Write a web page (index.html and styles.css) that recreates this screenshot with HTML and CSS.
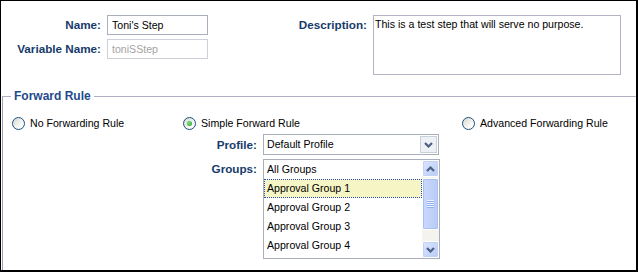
FILE: index.html
```html
<!DOCTYPE html>
<html lang="en">
<head>
  <meta charset="UTF-8">
  <meta name="viewport" content="width=device-width, initial-scale=1.0">
  <title>Edit Step</title>
  <link rel="stylesheet" href="styles.css">
</head>
<body>
  <div class="frame">
    <div class="top">
      <label class="label" for="stepName">Name:</label>
      <input class="field" type="text" id="stepName" value="Toni's Step">
      <label class="label desc-label" for="stepDesc">Description:</label>
      <textarea class="desc" id="stepDesc">This is a test step that will serve no purpose.</textarea>
      <label class="label" for="varName">Variable Name:</label>
      <input class="field" type="text" id="varName" value="toniSStep" disabled>
    </div>

    <fieldset class="rule">
      <legend>Forward Rule</legend>
      <div class="options">
        <div class="option first"><span class="radio"></span>No Forwarding Rule</div>
        <div class="option second"><span class="radio checked"><span class="dot"></span></span>Simple Forward Rule</div>
        <div class="option"><span class="radio"></span>Advanced Forwarding Rule</div>
      </div>

      <div class="rule-grid">
        <div class="label mid">Profile:</div>
        <div class="select">
          <span class="select-text">Default Profile</span>
          <span class="select-btn">
            <svg width="9" height="6" viewBox="0 0 9 6"><path d="M1 1 L4.5 4.5 L8 1" fill="none" stroke="#4d6185" stroke-width="2.2"/></svg>
          </span>
        </div>

        <div class="label">Groups:</div>
        <div class="listbox">
          <div class="items">
            <div class="item">All Groups</div>
            <div class="item selected">Approval Group 1</div>
            <div class="item">Approval Group 2</div>
            <div class="item">Approval Group 3</div>
            <div class="item">Approval Group 4</div>
          </div>
          <div class="scrollbar">
            <span class="sb-btn">
              <svg width="9" height="6" viewBox="0 0 9 6"><path d="M1 5 L4.5 1.5 L8 5" fill="none" stroke="#4d6185" stroke-width="2.2"/></svg>
            </span>
            <span class="thumb"><span class="grip"></span></span>
            <span class="track"></span>
            <span class="sb-btn">
              <svg width="9" height="6" viewBox="0 0 9 6"><path d="M1 1 L4.5 4.5 L8 1" fill="none" stroke="#4d6185" stroke-width="2.2"/></svg>
            </span>
          </div>
        </div>
      </div>
    </fieldset>
  </div>
</body>
</html>
```

FILE: styles.css
```css
body {
  margin: 0;
  font-family: 'Liberation Sans', Arial, sans-serif;
  font-size: 10.6px;
  color: #000;
}
.frame {
  width: 638px;
  height: 272px;
  box-sizing: border-box;
  border: 1px solid #000;
  border-right-width: 2px;
  border-bottom-width: 2px;
  background: #fff;
  overflow: hidden;
}
.top {
  display: grid;
  grid-template-columns: 100px 101px 153px 248px;
  grid-template-rows: 20px 20px;
  column-gap: 6px;
  row-gap: 4px;
  padding-top: 14px;
  height: 88px;
  box-sizing: border-box;
}
.label {
  font-weight: bold;
  font-size: 11.7px;
  color: #173b6c;
  text-align: right;
  line-height: 20px;
}
.field {
  box-sizing: border-box;
  width: 101px;
  height: 20px;
  margin: 0;
  padding: 0 4px;
  border: 1px solid #a9aebb;
  font-family: inherit;
  font-size: 10.6px;
  color: #000;
  background: #fff;
}
.field:disabled {
  border-color: #cdd0d8;
  color: #a3a3a3;
}
.desc {
  grid-column: 4;
  grid-row: 1 / span 2;
  align-self: start;
  box-sizing: border-box;
  width: 248px;
  height: 60px;
  margin: 0;
  padding: 2px 1px;
  border: 1px solid #b2b4c6;
  resize: none;
  font-family: inherit;
  font-size: 10.6px;
  line-height: 13px;
  color: #000;
}
.rule {
  margin: 0 0 0 1px;
  padding: 0;
  border: none;
  border-top: 1px solid #b0b0c4;
  border-left: 1px solid #a0a2b4;
  min-width: 0;
  height: 190px;
}
.rule legend {
  margin-left: 8px;
  padding: 0 3px;
  font-weight: bold;
  font-size: 12px;
  line-height: 14px;
  color: #1f4a8c;
}
.options {
  display: flex;
  height: 18px;
  padding-left: 9px;
  margin-top: 11px;
}
.option {
  display: flex;
  align-items: center;
  gap: 5px;
}
.option.first {
  width: 171px;
}
.option.second {
  width: 279px;
}
.radio {
  width: 13px;
  height: 13px;
  box-sizing: border-box;
  border: 1px solid #1c5180;
  border-radius: 50%;
  background: linear-gradient(135deg, #d8d8d0, #fbfbf9 70%);
  display: flex;
  align-items: center;
  justify-content: center;
}
.dot {
  width: 5px;
  height: 5px;
  border-radius: 50%;
  background: radial-gradient(circle at 40% 40%, #7fe07f, #1e9d1e);
}
.rule-grid {
  display: grid;
  grid-template-columns: 80px 176px;
  grid-template-rows: 21px 100px;
  column-gap: 6px;
  row-gap: 4px;
  margin-left: 174px;
  margin-top: 2px;
}
.rule-grid .label {
  line-height: 19px;
}
.rule-grid .label.mid {
  line-height: 21px;
}
.select {
  display: flex;
  box-sizing: border-box;
  height: 21px;
  border: 1px solid #a9aebb;
}
.select-text {
  flex: 1;
  padding-left: 3px;
  line-height: 19px;
}
.select-btn {
  width: 17px;
  box-sizing: border-box;
  margin: 1px;
  border: 1px solid #c9cfdb;
  background: #edf0f5;
  display: flex;
  align-items: center;
  justify-content: center;
}
.listbox {
  display: flex;
  box-sizing: border-box;
  height: 100px;
  width: 177px;
  border: 1px solid #a9aebb;
}
.items {
  flex: 1;
}
.item {
  height: 19px;
  line-height: 19px;
  padding-left: 3px;
}
.item.selected {
  background: #f6f5c6;
  outline: 1px dotted #2a4cae;
  outline-offset: -1px;
}
.scrollbar {
  width: 17px;
  display: flex;
  flex-direction: column;
  background: #f4f3ee;
}
.sb-btn {
  height: 17px;
  box-sizing: border-box;
  border: 1px solid #fff;
  border-radius: 2px;
  background: linear-gradient(135deg, #dbe5fe, #b9ccf7);
  box-shadow: 0 0 0 1px #c2d2f4 inset;
  display: flex;
  align-items: center;
  justify-content: center;
}
.thumb {
  height: 52px;
  margin-top: 1px;
  box-sizing: border-box;
  border: 1px solid #fff;
  border-radius: 2px;
  background: linear-gradient(to right, #cad8fd, #b8cbf6);
  box-shadow: 0 0 0 1px #a9bff2 inset;
  display: flex;
  align-items: center;
  justify-content: center;
}
.grip {
  width: 7px;
  height: 8px;
  background: repeating-linear-gradient(to bottom, #eef3fe 0 1px, #8eaff4 1px 2px);
}
.track {
  flex: 1;
}
```
